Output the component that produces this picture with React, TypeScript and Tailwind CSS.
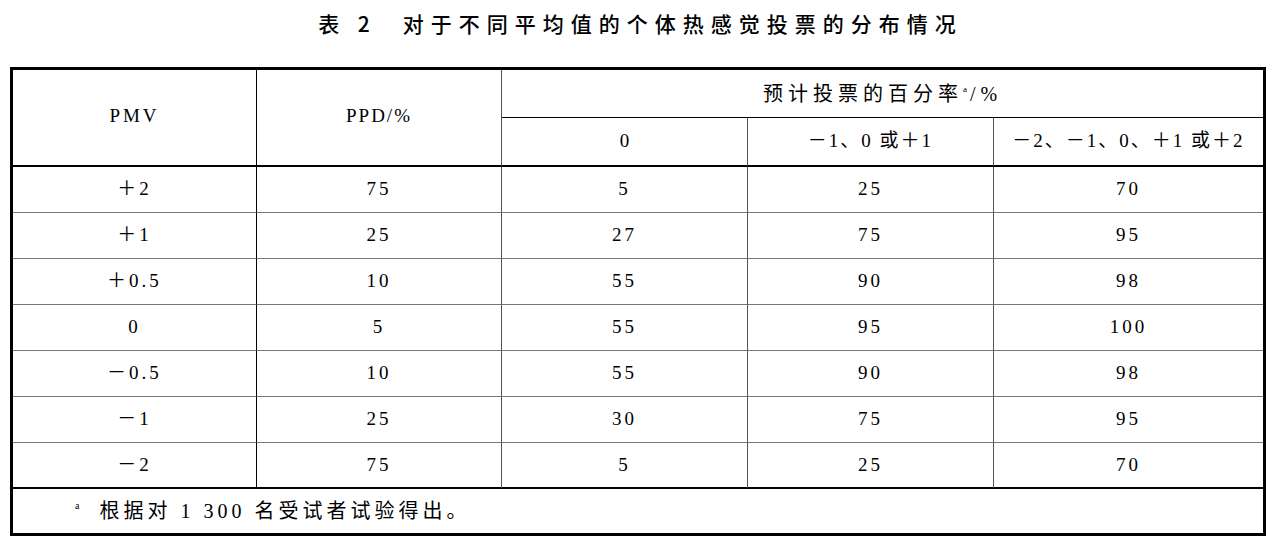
const rows: [string, string, string, string, string][] = [
  ['＋2', '75', '5', '25', '70'],
  ['＋1', '25', '27', '75', '95'],
  ['＋0.5', '10', '55', '90', '98'],
  ['0', '5', '55', '95', '100'],
  ['－0.5', '10', '55', '90', '98'],
  ['－1', '25', '30', '75', '95'],
  ['－2', '75', '5', '25', '70'],
];

const cell = 'flex items-center justify-center';

export default function App() {
  return (
    <div className="w-[1281px] h-[553px] bg-white overflow-hidden">
      <div className="h-[46px] flex items-center justify-center">
        <h1 className="font-['Noto_Sans_CJK_SC',sans-serif] font-medium text-[21px] tracking-[7px] text-black leading-none">
          表 2<span className="inline-block w-[26px]" />对于不同平均值的个体热感觉投票的分布情况
        </h1>
      </div>

      <div className="mt-[21px] ml-[10px] w-[1256px] border-[3px] border-black grid grid-cols-[244px_245px_246px_246px_269px] grid-rows-[48px_49px_repeat(7,46px)_44px] font-['Liberation_Serif','Noto_Sans_CJK_SC',serif] text-[19px] text-black">
        {/* header */}
        <div className={`${cell} row-span-2 border-r border-black border-b-2 tracking-[3px] pb-[2px]`}>PMV</div>
        <div className={`${cell} row-span-2 border-r border-[#555] border-b-2 border-b-black tracking-[2px] pb-[2px]`}>
          PPD/%
        </div>
        <div className={`${cell} col-span-3 border-b border-black tracking-[5px] text-[20px]`}>
          预计投票的百分率<sup className="text-[9px] tracking-normal mr-[3px]">a</sup>/%
        </div>
        <div className={`${cell} border-r border-[#555] border-b-2 border-b-black`}>0</div>
        <div className={`${cell} border-r border-[#555] border-b-2 border-b-black tracking-[2px]`}>－1、0 或＋1</div>
        <div className={`${cell} border-b-2 border-black tracking-[2px]`}>－2、－1、0、＋1 或＋2</div>

        {/* data */}
        {rows.map((r, i) => {
          const last = i === rows.length - 1;
          const bottom = last ? 'border-b-2 border-b-black' : 'border-b border-b-[#777]';
          return r.map((v, j) => (
            <div
              key={`${i}-${j}`}
              className={`${cell} tracking-[3px] ${bottom} ${
                j === 0 ? 'border-r border-r-black' : j < 4 ? 'border-r border-r-[#555]' : ''
              }`}
            >
              {v}
            </div>
          ));
        })}

        {/* footnote */}
        <div className="col-span-5 flex items-center pl-[62px] tracking-[4px] text-[20px]">
          <sup className="text-[10px] tracking-normal mr-[20px]">a</sup>
          根据对 1 300 名受试者试验得出。
        </div>
      </div>
    </div>
  );
}
